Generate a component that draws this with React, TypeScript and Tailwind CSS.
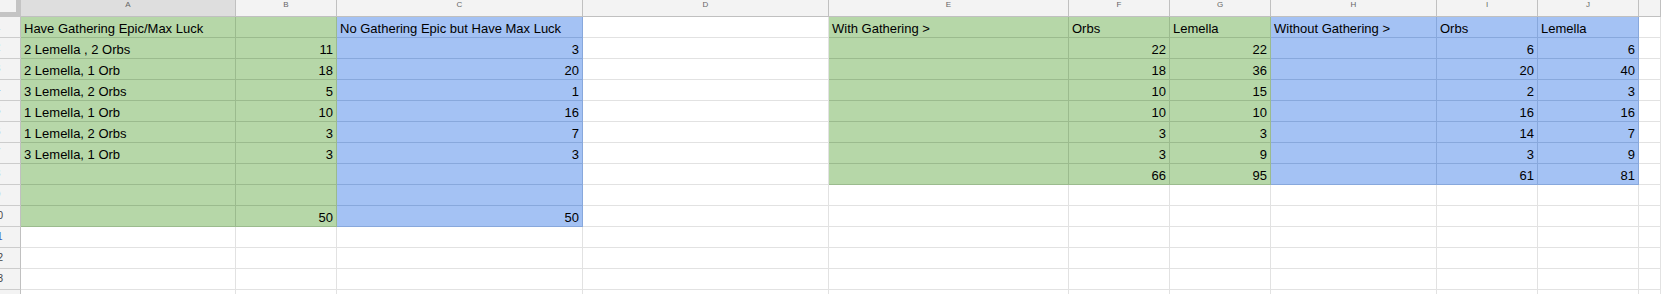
const letters = ["A", "B", "C", "D", "E", "F", "G", "H", "I", "J", ""];

type Region = "g" | "b" | "w";

const regionCls: Record<Region, string> = {
  g: "bg-[#b6d7a8] border-[#9bbb8e]",
  b: "bg-[#a4c2f4] border-[#88a8dc]",
  w: "bg-white border-[#e2e2e2]",
};

// cell text by row (1-based) and column index (0 = A)
const data: Record<number, (string | number | null)[]> = {
  1: ["Have Gathering Epic/Max Luck", null, "No Gathering Epic but Have Max Luck", null, "With Gathering >", "Orbs", "Lemella", "Without Gathering >", "Orbs", "Lemella"],
  2: ["2 Lemella , 2 Orbs", 11, 3, null, null, 22, 22, null, 6, 6],
  3: ["2 Lemella, 1 Orb", 18, 20, null, null, 18, 36, null, 20, 40],
  4: ["3 Lemella, 2 Orbs", 5, 1, null, null, 10, 15, null, 2, 3],
  5: ["1 Lemella, 1 Orb", 10, 16, null, null, 10, 10, null, 16, 16],
  6: ["1 Lemella, 2 Orbs", 3, 7, null, null, 3, 3, null, 14, 7],
  7: ["3 Lemella, 1 Orb", 3, 3, null, null, 3, 9, null, 3, 9],
  8: [null, null, null, null, null, 66, 95, null, 61, 81],
  10: [null, 50, 50],
};

function regionOf(row: number, col: number): Region {
  if (row <= 10 && col <= 1) return "g";
  if (row <= 10 && col === 2) return "b";
  if (row <= 8 && col >= 4 && col <= 6) return "g";
  if (row <= 8 && col >= 7 && col <= 9) return "b";
  return "w";
}

export default function App() {
  const rows = Array.from({ length: 14 }, (_, i) => i + 1);

  return (
    <div
      className="w-[1661px] h-[294px] overflow-hidden bg-white grid grid-cols-[21px_215px_101px_246px_246px_240px_101px_101px_166px_101px_101px_1fr] grid-rows-[17px_repeat(14,21px)] text-[13px] text-black"
      style={{ fontFamily: '"Liberation Sans", Arial, sans-serif' }}
    >
      {/* corner */}
      <div className="bg-[#f3f3f3] border-r-[5px] border-b-[5px] border-[#c4c4c4]" />
      {letters.map((l, i) => (
        <div
          key={"h" + i}
          className={
            "border-r border-b border-[#c0c0c0] text-center text-[8px] leading-[8px] pt-[1px] text-[#666666] " +
            (i === 0 ? "bg-[#dedede]" : "bg-[#f3f3f3]")
          }
        >
          {l}
        </div>
      ))}

      {rows.map((r) => (
        <Row key={r} row={r} />
      ))}
    </div>
  );
}

function Row({ row }: { row: number }) {
  const cells = data[row] || [];
  return (
    <>
      <div className="bg-[#f3f3f3] border-r border-b border-r-[#c0c0c0] border-b-[#cccccc] overflow-hidden flex items-center">
        <div
          className={
            "shrink-0 ml-[-30px] w-[55px] text-center text-[10px] leading-[10px] " +
            (row === 11 ? "text-[#3b5db5]" : "text-[#444444]")
          }
        >
          {row}
        </div>
      </div>
      {Array.from({ length: 11 }, (_, c) => {
        const v = c < 10 ? cells[c] : null;
        const isNum = typeof v === "number";
        return (
          <div
            key={c}
            className={
              "border-r border-b flex items-end overflow-hidden whitespace-nowrap px-[3px] " +
              regionCls[regionOf(row, c)] +
              (isNum ? " justify-end" : " justify-start")
            }
          >
            {v !== null && v !== undefined && <span className="leading-[17px]">{v}</span>}
          </div>
        );
      })}
    </>
  );
}
